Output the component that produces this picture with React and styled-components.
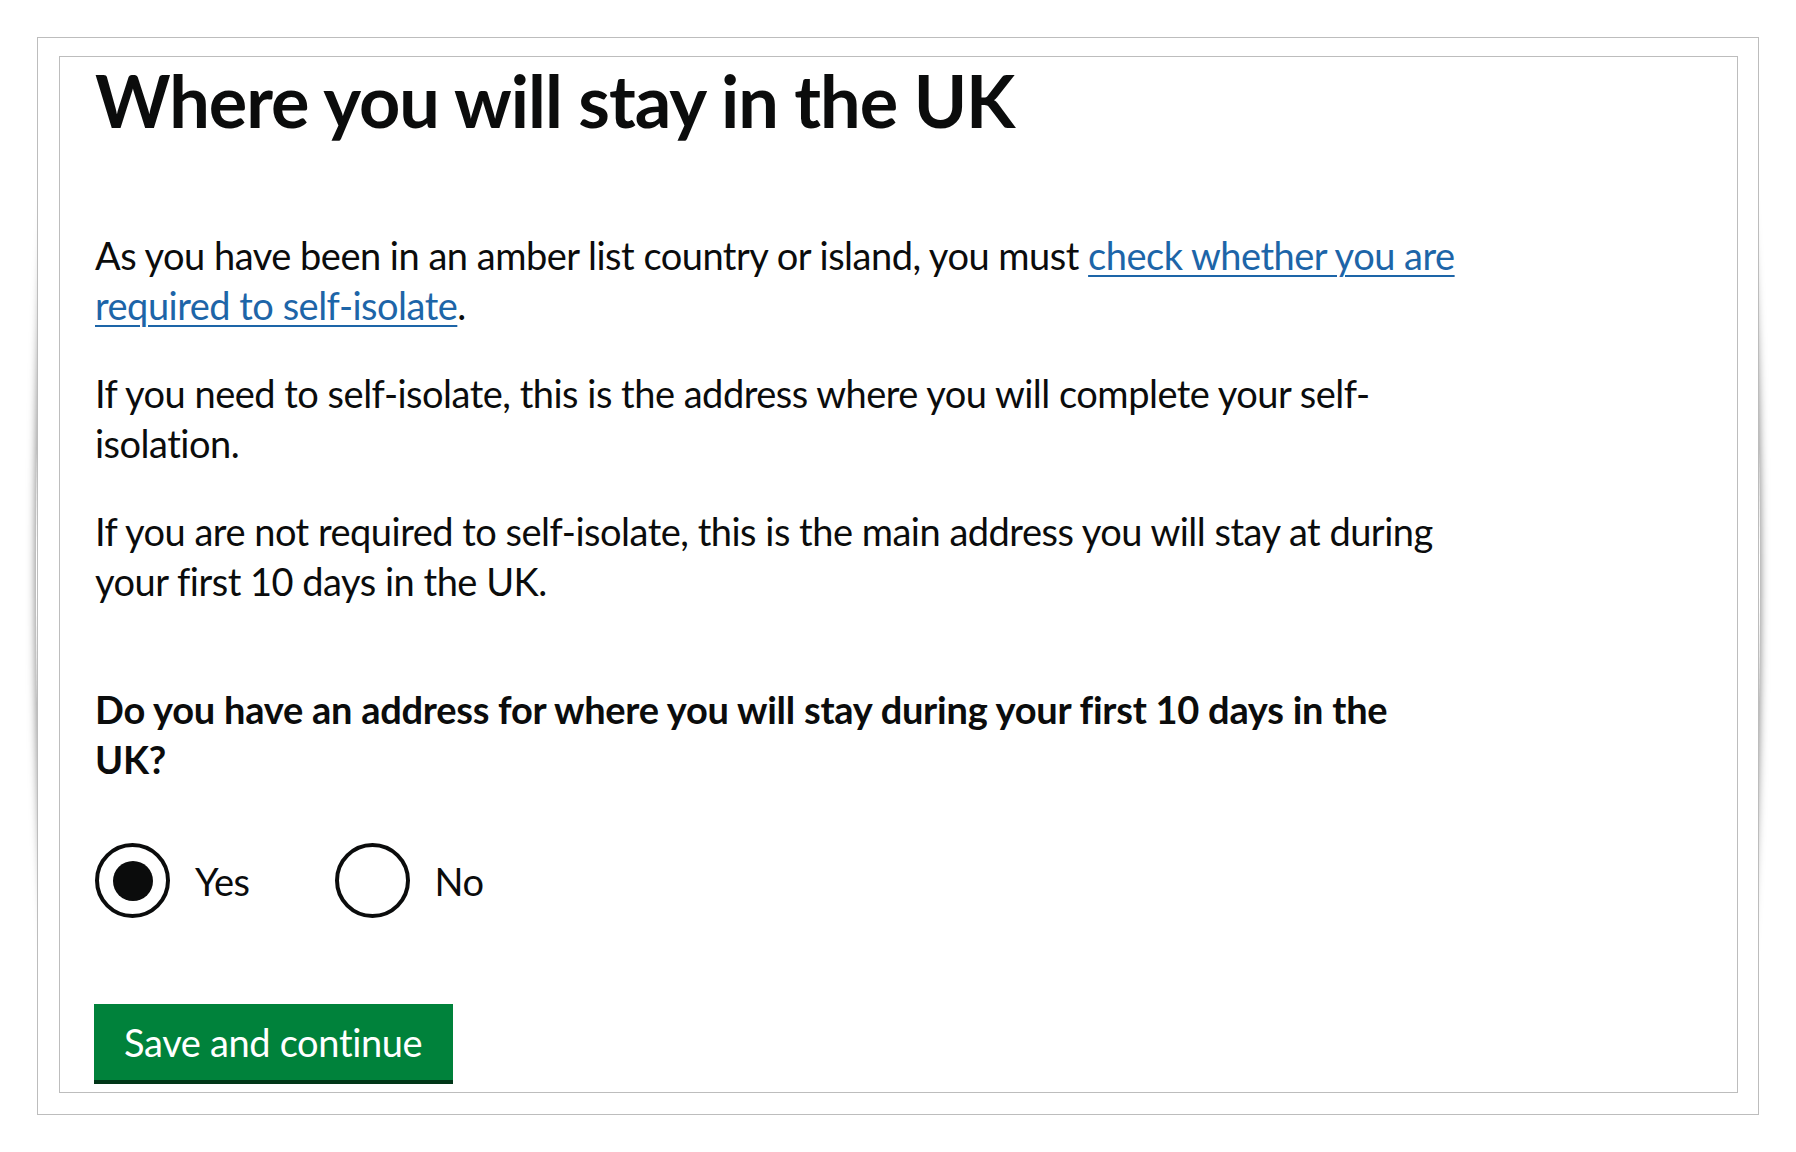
import React from "react";
import styled, { createGlobalStyle } from "styled-components";

const GlobalStyle = createGlobalStyle`
  html {
    background: #ffffff;
  }
  body {
    margin: 0;
    padding: 0;
    font-family: Lato, "Noto Sans", Arial, sans-serif;
    color: #0b0c0c;
  }
  * {
    box-sizing: border-box;
  }
`;

function App() {
  return (
    <>
      <GlobalStyle />
      <Page>
        <OuterFrame>
          <InnerFrame>
            <Heading>Where you will stay in the UK</Heading>
            <Body>
              As you have been in an amber list country or island, you must{" "}
              <Link href="#">
                check whether you are
                <br />
                required to self-isolate
              </Link>
              .
            </Body>
            <Body>
              If you need to self-isolate, this is the address where you will
              complete your self-
              <br />
              isolation.
            </Body>
            <Body>
              If you are not required to self-isolate, this is the main address
              you will stay at during
              <br />
              your first 10 days in the UK.
            </Body>
            <Fieldset>
              <Legend>
                Do you have an address for where you will stay during your first
                10 days in the
                <br />
                UK?
              </Legend>
              <RadioRow>
                <RadioItem>
                  <RadioCircle checked />
                  <RadioLabel>Yes</RadioLabel>
                </RadioItem>
                <RadioItem>
                  <RadioCircle />
                  <RadioLabel>No</RadioLabel>
                </RadioItem>
              </RadioRow>
            </Fieldset>
            <Button type="button">Save and continue</Button>
          </InnerFrame>
        </OuterFrame>
      </Page>
    </>
  );
}

export default App;

const Page = styled.div`
  padding: 37px 0 0 37px;
`;

const OuterFrame = styled.div`
  position: relative;
  width: 1722px;
  height: 1078px;
  padding: 18px 20px 21px 21px;
  background: #ffffff;
  border: 1px solid #bdbdbd;

  &::before {
    content: "";
    position: absolute;
    top: 90px;
    bottom: 90px;
    left: -2px;
    right: -2px;
    border-radius: 24px / 50%;
    box-shadow: 0 0 10px rgba(0, 0, 0, 0.55);
    z-index: -1;
  }
`;

const InnerFrame = styled.div`
  height: 100%;
  display: flex;
  flex-direction: column;
  align-items: flex-start;
  padding: 3px 0 0 35px;
  border: 1px solid #bdbdbd;
`;

const Heading = styled.h1`
  margin: 0 0 90px;
  font-size: 72px;
  line-height: 80px;
  font-weight: 700;
  letter-spacing: -1px;
`;

const Body = styled.p`
  margin: 0 0 38px;
  font-size: 38px;
  line-height: 50px;
  font-weight: 400;
  letter-spacing: -0.5px;
`;

const Link = styled.a`
  color: #1d65a8;
  text-decoration: underline;
  text-decoration-thickness: 2px;
  text-underline-offset: 5px;
`;

const Fieldset = styled.fieldset`
  margin: 40px 0 0;
  padding: 0;
  border: 0;
`;

const Legend = styled.legend`
  padding: 0;
  margin: 0 0 59px;
  font-size: 38px;
  line-height: 50px;
  font-weight: 700;
  letter-spacing: -0.25px;
`;

const RadioRow = styled.div`
  display: flex;
  align-items: center;
  gap: 85px;
`;

const RadioItem = styled.label`
  display: flex;
  align-items: center;
  gap: 25px;
  cursor: pointer;
`;

const RadioCircle = styled.span`
  position: relative;
  width: 75px;
  height: 75px;
  border: 4px solid #0b0c0c;
  border-radius: 50%;
  flex-shrink: 0;

  &::after {
    content: "";
    display: ${(p) => (p.checked ? "block" : "none")};
    position: absolute;
    top: 13.5px;
    left: 13.5px;
    width: 40px;
    height: 40px;
    border-radius: 50%;
    background: #0b0c0c;
  }
`;

const RadioLabel = styled.span`
  font-size: 38px;
  line-height: 50px;
  letter-spacing: -0.5px;
`;

const Button = styled.button`
  margin-top: 86px;
  margin-left: -1px;
  height: 80px;
  padding: 0 31px 4px 30px;
  border: 0;
  border-radius: 0;
  background: #00823b;
  box-shadow: inset 0 -4px 0 #003618;
  color: #ffffff;
  font-family: inherit;
  font-size: 38px;
  line-height: 76px;
  letter-spacing: -0.35px;
  cursor: pointer;
`;
